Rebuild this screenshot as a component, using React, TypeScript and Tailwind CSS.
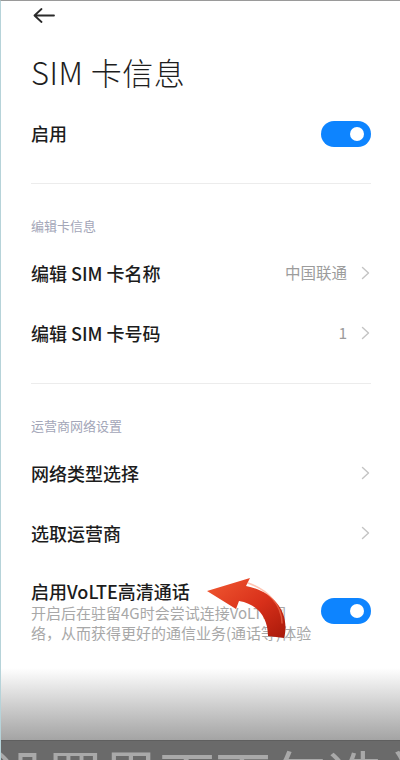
import React from 'react';

const Toggle: React.FC = () => (
  <div className="w-[50px] h-[26px] rounded-full bg-[#0d84ff] flex items-center justify-end pr-[7px] shrink-0">
    <div className="w-[14px] h-[14px] rounded-full bg-white" />
  </div>
);

const Chevron: React.FC = () => (
  <svg width="10" height="14" viewBox="0 0 10 14" className="shrink-0">
    <path d="M1.5 1.5 L7.5 7 L1.5 12.5" fill="none" stroke="#c4c4c4" strokeWidth="1.4" strokeLinecap="round" strokeLinejoin="round" />
  </svg>
);

const SectionLabel: React.FC<{ text: string }> = ({ text }) => (
  <div className="pt-[33px] pb-[8px] text-[13px] leading-[18px] text-[#a3a6b8]">{text}</div>
);

const NavRow: React.FC<{ title: string; value?: string }> = ({ title, value }) => (
  <div className="h-[60px] flex items-center justify-between">
    <span className="text-[18px] font-medium text-[#1c1c1c]">{title}</span>
    <div className="flex items-center gap-[14px]">
      {value && <span className="text-[15.5px] text-[#9c9c9c]">{value}</span>}
      <Chevron />
    </div>
  </div>
);

const Divider: React.FC<{ className?: string }> = ({ className }) => (
  <div className={`h-px bg-[#ececec] ${className ?? ''}`} />
);

const App: React.FC = () => {
  return (
    <div className="relative w-[400px] h-[760px] overflow-hidden bg-white border-t border-t-[#9a9a9a] border-l border-l-[#b6d3d9] flex flex-col font-[family-name:'Noto_Sans_CJK_SC','Noto_Sans',sans-serif]">
      <div className="px-[30px] pr-[29px]">
        {/* header */}
        <div className="h-[29px] flex items-center">
          <svg width="22" height="15" viewBox="0 0 22 15" className="ml-[2px]">
            <path d="M21 7.5 H2 M8.5 1 L1.5 7.5 L8.5 14" fill="none" stroke="#2a2a2a" strokeWidth="1.8" strokeLinecap="round" strokeLinejoin="round" />
          </svg>
        </div>

        <div className="h-[84px] flex items-center">
          <h1 className="text-[31px] font-light text-[#1e1e1e] tracking-[0.5px]">SIM 卡信息</h1>
        </div>

        <div className="h-[39px] flex items-center justify-between">
          <span className="text-[18px] font-medium text-[#1c1c1c]">启用</span>
          <Toggle />
        </div>

        <Divider className="mt-[30px]" />

        <SectionLabel text="编辑卡信息" />
        <NavRow title="编辑 SIM 卡名称" value="中国联通" />
        <NavRow title="编辑 SIM 卡号码" value="1" />

        <Divider className="mt-[20px]" />

        <SectionLabel text="运营商网络设置" />
        <NavRow title="网络类型选择" />
        <NavRow title="选取运营商" />

        <div className="pt-[16px] flex items-center justify-between">
          <div>
            <div className="text-[18px] leading-[24px] font-medium text-[#1c1c1c]">启用VoLTE高清通话</div>
            <div className="text-[15px] leading-[20px] text-[#a8a8a8]">
              开启后在驻留4G时会尝试连接VoLTE网
              <br />
              络，从而获得更好的通信业务(通话等)体验
            </div>
          </div>
          <Toggle />
        </div>
      </div>

      {/* caption overlay at bottom */}
      <div className="mt-auto">
        <div className="h-[72px] bg-gradient-to-b from-white to-[#a4a4a4]" />
        <div className="h-[20px] bg-[#6a6a6a] border-t border-t-[#5f5f5f] overflow-hidden">
          <div className="ml-[-10px] pt-[5px] text-[56px] leading-none text-[#a9a9a9] whitespace-nowrap">
            设置界面下勾选并开启
          </div>
        </div>
      </div>

      {/* red pointer arrow */}
      <svg className="absolute left-[200px] top-[570px] w-[95px] h-[75px]" viewBox="200 570 95 75">
        <defs>
          <linearGradient id="arrowRed" x1="0" y1="0" x2="1" y2="1">
            <stop offset="0" stopColor="#f25a32" />
            <stop offset="0.55" stopColor="#d8301a" />
            <stop offset="1" stopColor="#a8190a" />
          </linearGradient>
        </defs>
        <path
          d="M206 590 L249 577 L245 585 C272 590 290 611 283 637 L267 635 C267 616 256 603 238 600 L235 608 Z"
          fill="url(#arrowRed)"
        />
        <path
          d="M247 582 C267 589 281 604 281 622"
          fill="none"
          stroke="#ff8a66"
          strokeOpacity="0.5"
          strokeWidth="1.5"
          strokeLinecap="round"
        />
      </svg>
    </div>
  );
};

export default App;
